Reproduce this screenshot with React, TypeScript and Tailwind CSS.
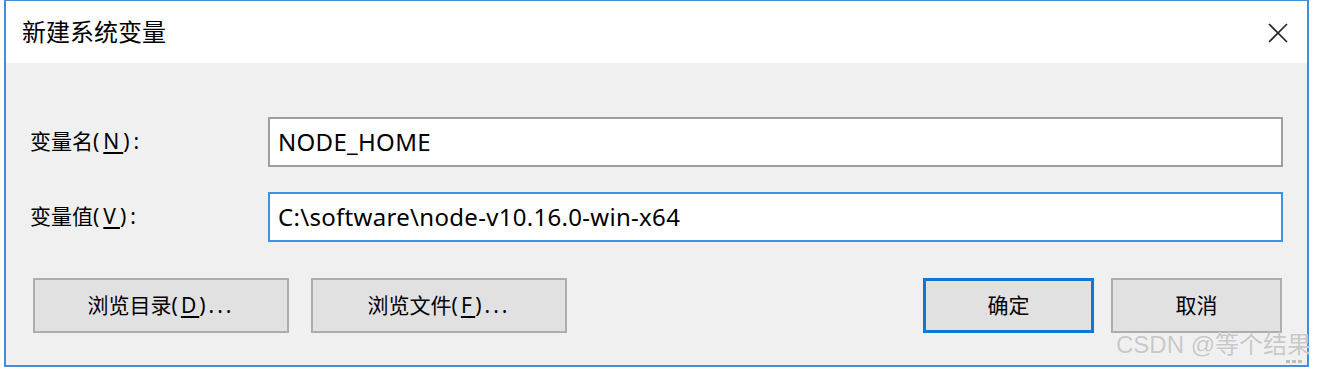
import React from "react";

const FONT = { fontFamily: '"Noto Sans", "Noto Sans CJK SC", sans-serif' };

function Hot({ k }: { k: string }) {
  return (
    <span className="tracking-[4px]">
      (<span className="underline underline-offset-[3px]">{k}</span>)
    </span>
  );
}

function Field({ label, hot, value, focused }: { label: string; hot: string; value: string; focused?: boolean }) {
  return (
    <div className="flex h-[50px] items-center">
      <div className="w-[262px] pl-[24px] text-[21px] text-black">
        {label}
        <Hot k={hot} />
        <span className="tracking-[2px]">:</span>
      </div>
      <div
        className={
          "flex h-[50px] w-[1015px] items-center bg-white pl-[8px] text-[24px] tracking-[0.3px] text-black " +
          (focused ? "border-2 border-[#3a93e3]" : "border-2 border-[#9e9e9e]")
        }
      >
        {value}
      </div>
    </div>
  );
}

function Btn({ children, primary, wide }: { children: React.ReactNode; primary?: boolean; wide?: boolean }) {
  return (
    <div
      className={
        "flex h-[55px] items-center justify-center bg-[#e1e1e1] text-[21px] text-black " +
        (wide ? "w-[256px] " : "w-[171px] ") +
        (primary ? "border-[3px] border-[#0a78d7]" : "border-2 border-[#adadad]")
      }
    >
      {children}
    </div>
  );
}

export default function App() {
  return (
    <div className="relative h-[367px] w-[1318px] bg-white" style={FONT}>
      <div className="ml-[4px] flex h-[367px] w-[1305px] flex-col border-2 border-t border-[#3d8fe0]">
        {/* title bar */}
        <div className="flex h-[62px] items-center justify-between bg-white pl-[16px] pr-[18px]">
          <span className="text-[24px] text-black">新建系统变量</span>
          <svg width="22" height="22" viewBox="0 0 22 22" className="mt-[1px]">
            <path d="M2 2 L20 20 M20 2 L2 20" stroke="#222" strokeWidth="1.6" />
          </svg>
        </div>

        {/* body */}
        <div className="flex flex-1 flex-col bg-[#f0f0f0] pt-[54px]">
          <Field label="变量名" hot="N" value="NODE_HOME" />
          <div className="h-[25px]" />
          <Field label="变量值" hot="V" value="C:\software\node-v10.16.0-win-x64" focused />
          <div className="mt-[36px] flex pl-[27px] pr-[25px]">
            <Btn wide>
              浏览目录
              <span className="tracking-[3px]">
                (<span className="underline underline-offset-[3px]">D</span>)...
              </span>
            </Btn>
            <div className="w-[22px]" />
            <Btn wide>
              浏览文件
              <span className="tracking-[3px]">
                (<span className="underline underline-offset-[3px]">F</span>)...
              </span>
            </Btn>
            <div className="flex-1" />
            <Btn primary>确定</Btn>
            <div className="w-[17px]" />
            <Btn>取消</Btn>
          </div>
        </div>
      </div>

      {/* watermark */}
      <div
        className="absolute left-[1116px] top-[327px] whitespace-nowrap text-[24px] text-[#c8c8c8]"
        style={{ fontFamily: '"Liberation Sans", "Noto Sans CJK SC", sans-serif', textShadow: "0 0 1px #fff" }}
      >
        CSDN @等个结果
      </div>
      <div className="absolute left-[1286px] top-[360px] flex gap-[2px]">
        <span className="h-[3px] w-[4px] bg-[#bdbdbd]" />
        <span className="h-[3px] w-[4px] bg-[#bdbdbd]" />
        <span className="h-[3px] w-[4px] bg-[#bdbdbd]" />
      </div>
    </div>
  );
}
